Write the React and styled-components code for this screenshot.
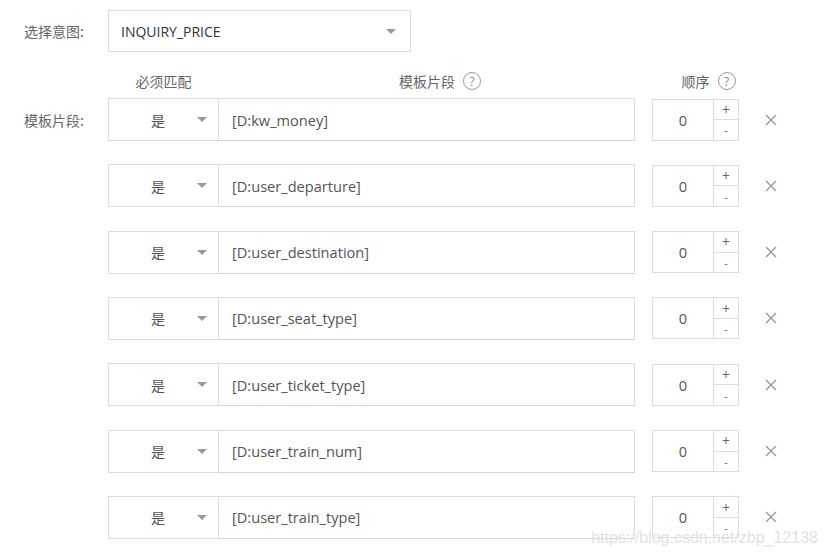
import React from "react";
import styled, { createGlobalStyle } from "styled-components";

const GlobalStyle = createGlobalStyle`
  html, body {
    margin: 0;
    padding: 0;
    background: #fff;
  }
  body {
    font-family: "Open Sans", "Noto Sans CJK SC", sans-serif;
    font-size: 14px;
    color: #555;
  }
`;

const Page = styled.div`
  position: relative;
  width: 825px;
  height: 555px;
  padding: 10px 0 0 24px;
  box-sizing: border-box;
  overflow: hidden;
`;

const FieldRow = styled.div`
  display: flex;
  align-items: center;
  height: ${(p) => p.$h || 43}px;
`;

const Label = styled.div`
  width: 84px;
  flex: none;
  font-family: "Noto Sans CJK SC", sans-serif;
  font-size: 14px;
  color: #666;
`;

const Caret = styled.span`
  width: 0;
  height: 0;
  border-left: 5px solid transparent;
  border-right: 5px solid transparent;
  border-top: 5px solid #999;
`;

const IntentSelect = styled.div`
  width: 303px;
  height: 42px;
  box-sizing: border-box;
  border: 1px solid #ddd;
  display: flex;
  align-items: center;
  justify-content: space-between;
  padding: 0 14px 0 12px;
  font-family: "Open Sans", sans-serif;
  font-size: 14px;
  color: #333;
`;

/* column heads sit over the select / input / stepper columns of each row */
const HeaderRow = styled.div`
  display: grid;
  grid-template-columns: 111px 416px 17px 87px;
  margin: 18px 0 6px 84px;
  height: 22px;
  align-items: center;
  font-family: "Noto Sans CJK SC", sans-serif;
  font-size: 14px;
  color: #666;
`;

const HeaderCell = styled.div`
  text-align: center;
  grid-column: ${(p) => p.$col};
`;

const HeaderText = styled.span`
  position: relative;
`;

const HelpIcon = styled.span`
  position: absolute;
  left: calc(100% + 8px);
  top: 50%;
  transform: translateY(-50%);
  width: 18px;
  height: 18px;
  box-sizing: border-box;
  border: 1px solid #999;
  border-radius: 50%;
  display: flex;
  align-items: center;
  justify-content: center;
  font-family: "Open Sans", sans-serif;
  font-size: 12px;
  color: #888;
`;

const Rows = styled.div`
  display: flex;
  flex-direction: column;
  gap: 23.33px;
`;

const MatchSelect = styled.div`
  width: 111px;
  height: 43px;
  box-sizing: border-box;
  border: 1px solid #ddd;
  display: flex;
  align-items: center;
  padding: 0 11px 0 42px;
  justify-content: space-between;
  font-family: "Noto Sans CJK SC", sans-serif;
  color: #555;
`;

const SegmentInput = styled.div`
  width: 416px;
  height: 43px;
  box-sizing: border-box;
  border: 1px solid #ddd;
  border-left: none;
  border-bottom-color: #d4d4d4;
  display: flex;
  align-items: center;
  padding-left: 13px;
  font-family: "Open Sans", sans-serif;
  font-size: 14.6px;
  color: #555;
`;

const Stepper = styled.div`
  margin-left: 17px;
  width: 87px;
  height: 42px;
  box-sizing: border-box;
  border: 1px solid #ddd;
  display: flex;
`;

const StepValue = styled.div`
  flex: 1;
  display: flex;
  align-items: center;
  justify-content: center;
  font-family: "Open Sans", sans-serif;
  font-size: 14.6px;
  color: #555;
`;

const StepButtons = styled.div`
  width: 24px;
  border-left: 1px solid #ddd;
  display: flex;
  flex-direction: column;
`;

const StepButton = styled.div`
  flex: 1;
  display: flex;
  align-items: center;
  justify-content: center;
  font-family: "Open Sans", sans-serif;
  font-size: ${(p) => (p.$minus ? 11 : 14)}px;
  color: #666;
  & + & {
    border-top: 1px solid #ddd;
  }
`;

const Remove = styled.svg`
  margin-left: 26px;
  flex: none;
`;

const Watermark = styled.div`
  position: absolute;
  right: 7px;
  bottom: 8px;
  font-family: "Liberation Sans", Arial, sans-serif;
  font-size: 16px;
  color: rgba(200, 200, 200, 0.55);
  text-shadow: 0 0 1px rgba(255, 255, 255, 0.8);
  pointer-events: none;
`;

const segments = [
  "[D:kw_money]",
  "[D:user_departure]",
  "[D:user_destination]",
  "[D:user_seat_type]",
  "[D:user_ticket_type]",
  "[D:user_train_num]",
  "[D:user_train_type]",
];

function CloseIcon() {
  return (
    <Remove width="12" height="12" viewBox="0 0 12 12">
      <path d="M1 1 L11 11 M11 1 L1 11" stroke="#999" strokeWidth="1.4" fill="none" />
    </Remove>
  );
}

export default function App() {
  return (
    <>
      <GlobalStyle />
      <Page>
        <FieldRow $h={42}>
          <Label>选择意图:</Label>
          <IntentSelect>
            INQUIRY_PRICE
            <Caret />
          </IntentSelect>
        </FieldRow>

        <HeaderRow>
          <HeaderCell $col={1}>必须匹配</HeaderCell>
          <HeaderCell $col={2}>
            <HeaderText>
              模板片段
              <HelpIcon>?</HelpIcon>
            </HeaderText>
          </HeaderCell>
          <HeaderCell $col={4}>
            <HeaderText>
              顺序
              <HelpIcon>?</HelpIcon>
            </HeaderText>
          </HeaderCell>
        </HeaderRow>

        <Rows>
          {segments.map((seg, i) => (
            <FieldRow key={seg}>
              <Label>{i === 0 ? "模板片段:" : ""}</Label>
              <MatchSelect>
                是
                <Caret />
              </MatchSelect>
              <SegmentInput>{seg}</SegmentInput>
              <Stepper>
                <StepValue>0</StepValue>
                <StepButtons>
                  <StepButton>+</StepButton>
                  <StepButton $minus>-</StepButton>
                </StepButtons>
              </Stepper>
              <CloseIcon />
            </FieldRow>
          ))}
        </Rows>

        <Watermark>https://blog.csdn.net/zbp_12138</Watermark>
      </Page>
    </>
  );
}
